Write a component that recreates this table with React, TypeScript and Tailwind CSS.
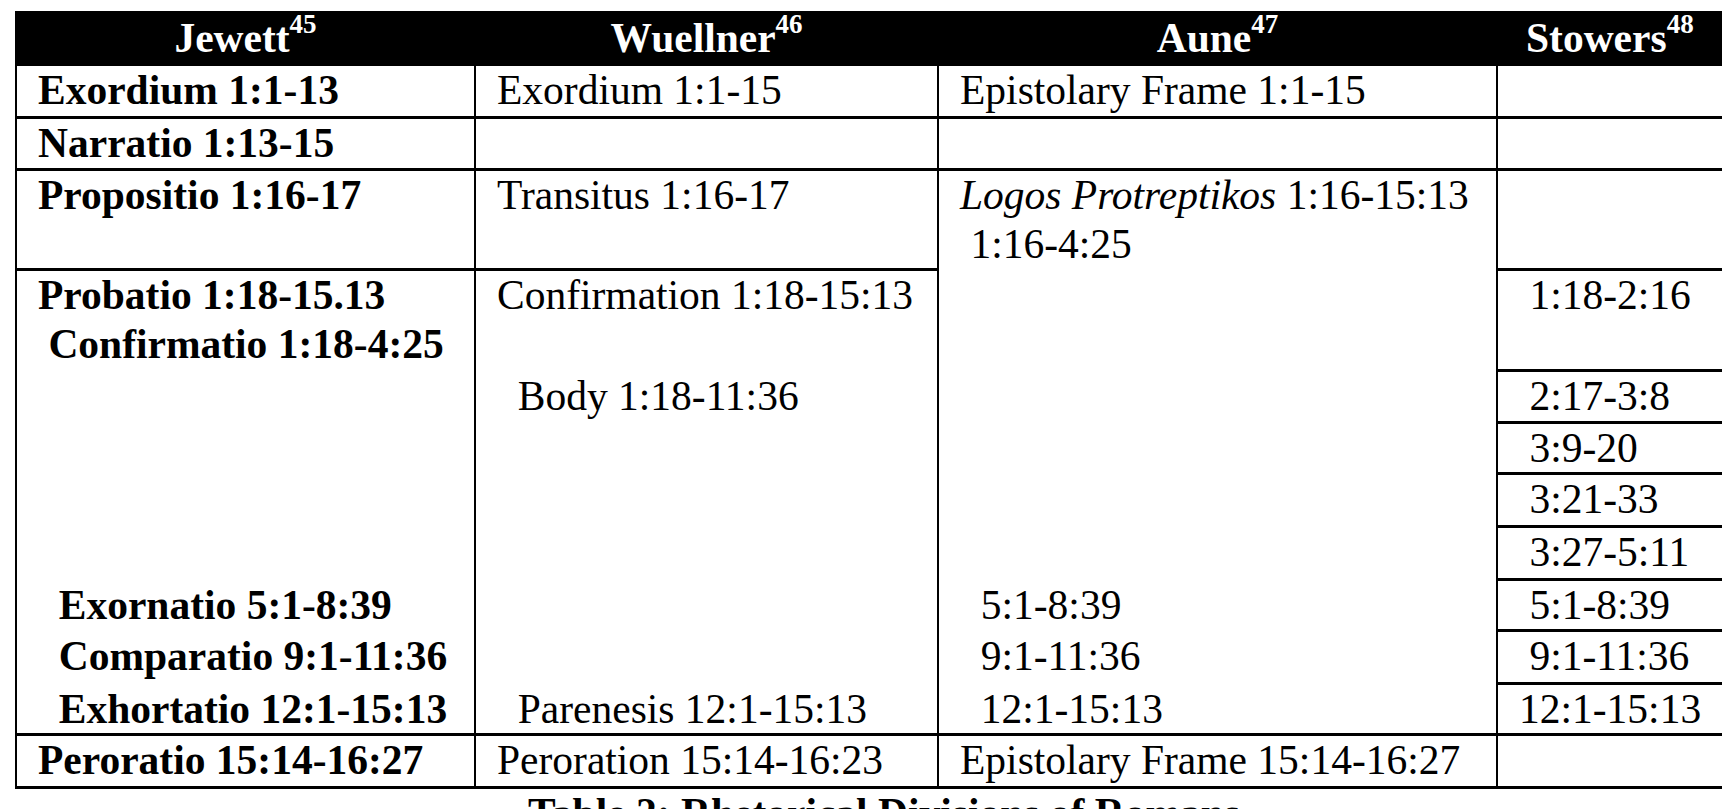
import clsx from "clsx";
import type { ReactNode } from "react";

const stowers = [
  " 1:18-2:16",
  " 2:17-3:8",
  " 3:9-20",
  " 3:21-33",
  " 3:27-5:11",
  " 5:1-8:39",
  " 9:1-11:36",
  "12:1-15:13",
];

function Head({ name, note, className }: { name: string; note: number; className?: string }) {
  return (
    <div className={clsx("whitespace-nowrap pt-[3px] font-bold text-white", className ?? "text-center")}>
      {name}
      <sup className="top-[-19px] text-[27px]">{note}</sup>
    </div>
  );
}

function Cell({
  children,
  bold,
  className,
}: {
  children?: ReactNode;
  bold?: boolean;
  className?: string;
}) {
  return (
    <div className={clsx("bg-white pl-[21px] whitespace-pre", bold && "font-bold", className)}>
      {children}
    </div>
  );
}

export default function App() {
  return (
    <div className="h-[809px] w-[1722px] overflow-hidden bg-white font-['Liberation_Serif',serif] text-[41.5px] leading-[49px] text-black">
      {/* ── Table ── */}
      <div className="ml-[15px] mt-[11px] grid w-[1738px] grid-cols-[457px_461px_557px_255px] grid-rows-[52px_50px_49px_97px_98px_49px_48px_50px_50px_48px_50px_48px_50px] gap-x-[2px] gap-y-[3px] bg-black pb-[3px] pl-[2px]">
        <Head name="Jewett" note={45} />
        <Head name="Wuellner" note={46} />
        <Head name="Aune" note={47} />
        <Head name="Stowers" note={48} className="pl-[28px] text-left" />

        <Cell bold>Exordium 1:1-13</Cell>
        <Cell>Exordium 1:1-15</Cell>
        <Cell>Epistolary Frame 1:1-15</Cell>
        <Cell />

        <Cell bold>Narratio 1:13-15</Cell>
        <Cell />
        <Cell />
        <Cell />

        <Cell bold>Propositio 1:16-17</Cell>
        <Cell>Transitus 1:16-17</Cell>
        <Cell className="row-span-9 flex flex-col">
          <div>
            <i>Logos Protreptikos</i> 1:16-15:13
          </div>
          <div> 1:16-4:25</div>
          <div className="mt-auto h-[51px]">  5:1-8:39</div>
          <div className="h-[53px]">  9:1-11:36</div>
          <div className="h-[48px]">  12:1-15:13</div>
        </Cell>
        <Cell />

        <Cell bold className="row-span-8 flex flex-col">
          <div>Probatio 1:18-15.13</div>
          <div> Confirmatio 1:18-4:25</div>
          <div className="mt-auto h-[51px]">  Exornatio 5:1-8:39</div>
          <div className="h-[53px]">  Comparatio 9:1-11:36</div>
          <div className="h-[48px]">  Exhortatio 12:1-15:13</div>
        </Cell>
        <Cell className="row-span-8 flex flex-col">
          <div className="h-[101px]">Confirmation 1:18-15:13</div>
          <div>  Body 1:18-11:36</div>
          <div className="mt-auto h-[48px]">  Parenesis 12:1-15:13</div>
        </Cell>
        {stowers.map((range) => (
          <Cell key={range}>{range}</Cell>
        ))}

        <Cell bold>Peroratio 15:14-16:27</Cell>
        <Cell>Peroration 15:14-16:23</Cell>
        <Cell>Epistolary Frame 15:14-16:27</Cell>
        <Cell />
      </div>

      {/* ── Caption ── */}
      <p className="ml-[15px] w-[1738px] text-center font-bold">Table 2: Rhetorical Divisions of Romans</p>
    </div>
  );
}
